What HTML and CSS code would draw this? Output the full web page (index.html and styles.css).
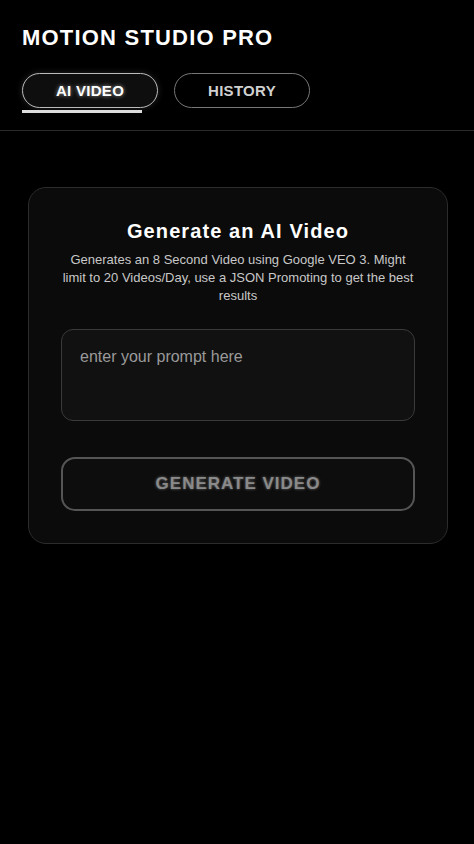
FILE: index.html
```html
<!DOCTYPE html>
<html lang="en">
<head>
    <meta charset="UTF-8">
    <meta name="viewport" content="width=device-width, initial-scale=1.0">
    <title>Motion Studio Pro</title>
    <link rel="stylesheet" href="styles.css">
</head>
<body>

    <header class="top">
        <h1 class="brand">MOTION STUDIO PRO</h1>
        <nav class="tabs">
            <button class="tab active">AI VIDEO</button>
            <button class="tab">HISTORY</button>
        </nav>
    </header>

    <main class="content">
        <section class="card">
            <h2>Generate an AI Video</h2>
            <p class="desc">Generates an 8 Second Video using Google VEO 3. Might limit to 20 Videos/Day, use a JSON Promoting to get the best results</p>
            <textarea class="prompt" placeholder="enter your prompt here"></textarea>
            <button class="generate">GENERATE VIDEO</button>
        </section>
    </main>

</body>
</html>
```

FILE: styles.css
```css
body {
    margin: 0;
    background: #000;
    color: #fff;
    font-family: "Liberation Sans", Arial, sans-serif;
}
.top {
    padding: 25px 22px 0;
    border-bottom: 1px solid #2b2b2b;
}
.brand {
    margin: 0;
    font-size: 22px;
    font-weight: bold;
    letter-spacing: 1.2px;
    line-height: 26px;
}
.tabs {
    display: flex;
    gap: 16px;
    margin-top: 22px;
    padding-bottom: 22px;
}
.tab {
    position: relative;
    width: 136px;
    height: 35px;
    border-radius: 18px;
    border: 1px solid #777;
    background: #000;
    color: #d0d0d0;
    font-family: "Liberation Sans", Arial, sans-serif;
    font-size: 15px;
    font-weight: bold;
    letter-spacing: 0.3px;
    cursor: pointer;
}
.tab.active {
    background: #0e0e0e;
    border-color: #bbb;
    color: #fff;
    text-shadow: 0 0 4px rgba(255, 255, 255, 0.6);
    box-shadow: 0 0 6px rgba(255, 255, 255, 0.15);
}
.tab.active::after {
    content: "";
    position: absolute;
    left: -1px;
    bottom: -6px;
    width: 120px;
    height: 3px;
    background: #ddd;
}
.content {
    padding: 56px 26px 56px 28px;
}
.card {
    background: #0b0b0b;
    border: 1px solid #2c2c2c;
    border-radius: 18px;
    padding: 30px 32px 32px;
    text-align: center;
}
.card h2 {
    margin: 0;
    font-size: 20px;
    letter-spacing: 1.1px;
    line-height: 26px;
}
.desc {
    margin: 7px 0 24px;
    font-size: 13px;
    line-height: 18px;
    color: #c8c8c8;
}
.prompt {
    display: block;
    box-sizing: border-box;
    width: 100%;
    height: 92px;
    padding: 18px 18px 16px;
    background: #111;
    border: 1px solid #3a3a3a;
    border-radius: 12px;
    color: #fff;
    font-family: "Liberation Sans", Arial, sans-serif;
    font-size: 16px;
    resize: none;
}
.prompt::placeholder {
    color: #9a9a9a;
}
.generate {
    display: block;
    box-sizing: border-box;
    width: 100%;
    height: 54px;
    margin-top: 36px;
    background: #0d0d0d;
    border: 2px solid #555;
    border-radius: 14px;
    color: #8a8a8a;
    font-family: "Liberation Sans", Arial, sans-serif;
    font-size: 17px;
    font-weight: bold;
    letter-spacing: 1px;
    text-shadow: 0 0 3px rgba(200, 200, 200, 0.5);
    cursor: pointer;
}
```
